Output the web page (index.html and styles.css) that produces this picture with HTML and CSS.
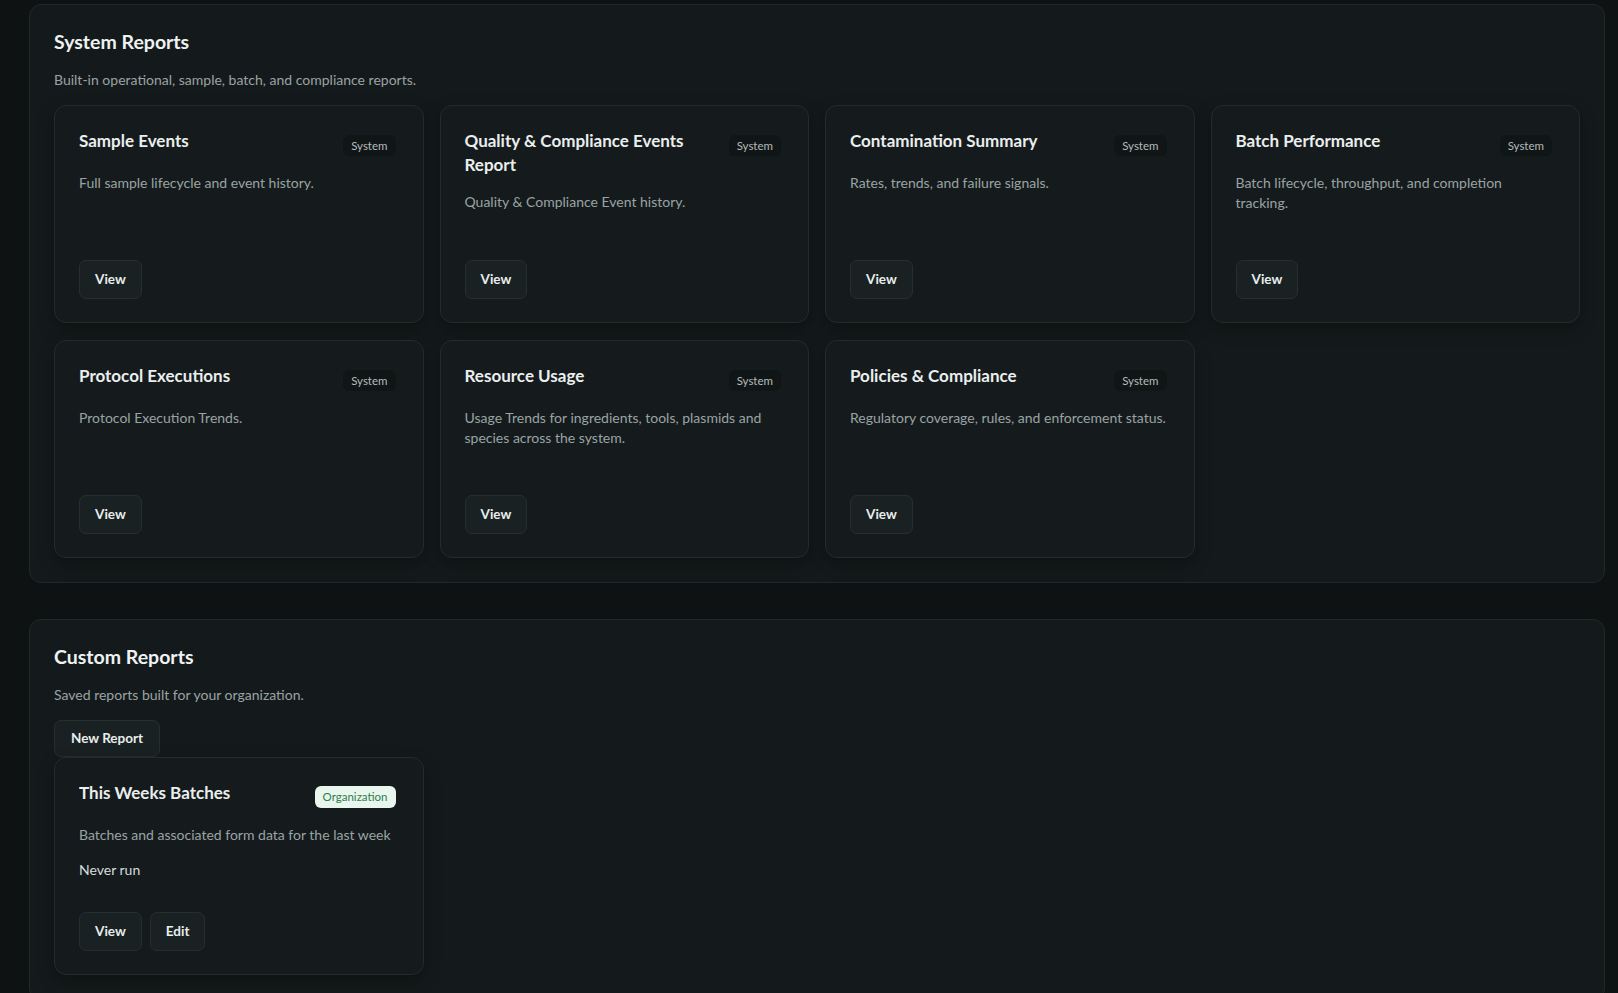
FILE: index.html
```html
<!DOCTYPE html>
<html lang="en">
<head>
<meta charset="utf-8">
<title>Reports</title>
<link rel="stylesheet" href="styles.css">
</head>
<body>

<div class="page">

	<section class="panel">
		<h2 class="panel-title">System Reports</h2>
		<p class="panel-sub">Built-in operational, sample, batch, and compliance reports.</p>

		<div class="grid">
			<div class="card">
				<div class="card-head">
					<h3 class="card-title">Sample Events</h3>
					<span class="badge">System</span>
				</div>
				<p class="card-desc">Full sample lifecycle and event history.</p>
				<div class="card-actions">
					<a href="#" class="btn">View</a>
				</div>
			</div>
			<div class="card">
				<div class="card-head">
					<h3 class="card-title">Quality &amp; Compliance Events Report</h3>
					<span class="badge">System</span>
				</div>
				<p class="card-desc">Quality &amp; Compliance Event history.</p>
				<div class="card-actions">
					<a href="#" class="btn">View</a>
				</div>
			</div>
			<div class="card">
				<div class="card-head">
					<h3 class="card-title">Contamination Summary</h3>
					<span class="badge">System</span>
				</div>
				<p class="card-desc">Rates, trends, and failure signals.</p>
				<div class="card-actions">
					<a href="#" class="btn">View</a>
				</div>
			</div>
			<div class="card">
				<div class="card-head">
					<h3 class="card-title">Batch Performance</h3>
					<span class="badge">System</span>
				</div>
				<p class="card-desc">Batch lifecycle, throughput, and completion tracking.</p>
				<div class="card-actions">
					<a href="#" class="btn">View</a>
				</div>
			</div>
			<div class="card">
				<div class="card-head">
					<h3 class="card-title">Protocol Executions</h3>
					<span class="badge">System</span>
				</div>
				<p class="card-desc">Protocol Execution Trends.</p>
				<div class="card-actions">
					<a href="#" class="btn">View</a>
				</div>
			</div>
			<div class="card">
				<div class="card-head">
					<h3 class="card-title">Resource Usage</h3>
					<span class="badge">System</span>
				</div>
				<p class="card-desc">Usage Trends for ingredients, tools, plasmids and species across the system.</p>
				<div class="card-actions">
					<a href="#" class="btn">View</a>
				</div>
			</div>
			<div class="card">
				<div class="card-head">
					<h3 class="card-title">Policies &amp; Compliance</h3>
					<span class="badge">System</span>
				</div>
				<p class="card-desc">Regulatory coverage, rules, and enforcement status.</p>
				<div class="card-actions">
					<a href="#" class="btn">View</a>
				</div>
			</div>
		</div>
	</section>

	<section class="panel">
		<h2 class="panel-title">Custom Reports</h2>
		<p class="panel-sub">Saved reports built for your organization.</p>

		<div class="toolbar">
			<a href="#" class="btn btn-sm">New Report</a>
		</div>

		<div class="grid">
			<div class="card">
				<div class="card-head">
					<h3 class="card-title">This Weeks Batches</h3>
					<span class="badge badge-org">Organization</span>
				</div>
				<p class="card-desc">Batches and associated form data for the last week</p>
				<p class="card-meta">Never run</p>
				<div class="card-actions tight">
					<a href="#" class="btn">View</a>
					<a href="#" class="btn">Edit</a>
				</div>
			</div>
		</div>
	</section>

</div>

</body>
</html>
```

FILE: styles.css
```css
html, body {
	margin: 0;
	padding: 0;
}

body {
	background-color: #0e1213;
	color: #e6ebeb;
	font-family: Lato, "Open Sans", sans-serif;
	font-size: 14px;
	line-height: 20px;
}

.page {
	padding: 4px 13px 0 29px;
	display: flex;
	flex-direction: column;
	gap: 36px;
}

.panel {
	background-color: #141a1b;
	border: 1px solid #212829;
	border-radius: 12px;
	padding: 23px 24px 24px;
}

.panel-title {
	margin: 0 0 14px;
	font-size: 19.5px;
	line-height: 28px;
	font-weight: 700;
	color: #eef2f2;
}

.panel-sub {
	margin: 0 0 15px;
	color: #9aa3a4;
}

.grid {
	display: grid;
	grid-template-columns: repeat(4, 1fr);
	gap: 17px 16px;
}

.card {
	display: flex;
	flex-direction: column;
	background-color: #151b1c;
	border: 1px solid #232b2c;
	border-radius: 12px;
	padding: 23px 24px;
	box-shadow: 0 6px 16px rgba(0, 0, 0, 0.35);
}

.card-head {
	display: flex;
	justify-content: space-between;
	align-items: flex-start;
	gap: 16px;
}

.card-title {
	margin: 0;
	font-size: 17px;
	line-height: 24px;
	font-weight: 700;
	color: #eaeeee;
}

.badge {
	flex-shrink: 0;
	margin: 6px 3px 2px 0;
	padding: 0 8px;
	height: 21px;
	line-height: 21px;
	font-size: 11.5px;
	border-radius: 6px;
	background-color: #101516;
	color: #b3bbbc;
}

.badge-org {
	margin-top: 5px;
	margin-bottom: 2px;
	height: 22px;
	line-height: 22px;
	background-color: #e9f6ee;
	color: #2f7d4c;
}

.card-desc {
	margin: 15px 0 0;
	color: #9aa3a4;
}

.card-meta {
	margin: 15px 0 0;
	color: #d6dcdc;
}

.card-actions {
	margin-top: auto;
	padding-top: 47px;
	display: flex;
	gap: 8px;
}

.card-actions.tight {
	padding-top: 32px;
}

.toolbar {
	display: flex;
	margin-top: 1px;
}

.btn {
	display: inline-block;
	height: 37px;
	line-height: 37px;
	padding: 0 15px;
	border: 1px solid #262f30;
	border-radius: 7px;
	background-color: #1a2122;
	color: #e8eded;
	font-size: 13.5px;
	font-weight: 700;
	text-decoration: none;
}

.btn-sm {
	height: 35px;
	line-height: 35px;
	padding: 0 16px;
}
```
